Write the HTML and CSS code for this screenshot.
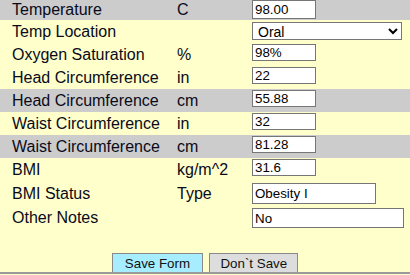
FILE: index.html
```html
<!DOCTYPE html>
<html lang="en">
<head>
    <meta charset="UTF-8">
    <title>Vitals</title>
    <link rel="stylesheet" href="styles.css">
</head>
<body>
<form class="vitals">
    <table class="grid">
        <colgroup>
            <col class="c-label">
            <col class="c-unit">
            <col class="c-field">
        </colgroup>
        <tr class="alt first">
            <td>Temperature</td>
            <td>C</td>
            <td><input class="num" type="text" value="98.00"></td>
        </tr>
        <tr>
            <td>Temp Location</td>
            <td></td>
            <td>
                <select class="pick">
                    <option>Oral</option>
                    <option>Axillary</option>
                    <option>Rectal</option>
                </select>
            </td>
        </tr>
        <tr>
            <td>Oxygen Saturation</td>
            <td>%</td>
            <td><input class="num" type="text" value="98%"></td>
        </tr>
        <tr>
            <td>Head Circumference</td>
            <td>in</td>
            <td><input class="num" type="text" value="22"></td>
        </tr>
        <tr class="alt">
            <td>Head Circumference</td>
            <td>cm</td>
            <td><input class="num" type="text" value="55.88"></td>
        </tr>
        <tr>
            <td>Waist Circumference</td>
            <td>in</td>
            <td><input class="num" type="text" value="32"></td>
        </tr>
        <tr class="alt">
            <td>Waist Circumference</td>
            <td>cm</td>
            <td><input class="num" type="text" value="81.28"></td>
        </tr>
        <tr>
            <td>BMI</td>
            <td>kg/m^2</td>
            <td><input class="num" type="text" value="31.6"></td>
        </tr>
        <tr class="tall">
            <td>BMI Status</td>
            <td>Type</td>
            <td><input class="mid" type="text" value="Obesity I"></td>
        </tr>
        <tr class="tall">
            <td>Other Notes</td>
            <td></td>
            <td><input class="wide" type="text" value="No"></td>
        </tr>
    </table>
    <div class="actions">
        <input class="btn save" type="button" value="Save Form">
        <input class="btn" type="button" value="Don`t Save">
    </div>
</form>
</body>
</html>
```

FILE: styles.css
```css
html,body{
    margin:0;
    padding:0;
}
body{
    background:#ffffcc;
    font-family:"Liberation Sans", Arial, sans-serif;
    color:#0a0a1a;
    height:275px;
    overflow:hidden;
}
.grid{
    width:100%;
    table-layout:fixed;
    border-collapse:collapse;
    font-size:16px;
}
.c-label{
    width:177px;
}
.c-unit{
    width:75px;
}
.grid td{
    padding:1px 0 1px 0;
    line-height:21px;
    vertical-align:top;
    white-space:nowrap;
}
.grid tr.alt{
    background:#cccccc;
}
.grid tr.first td{
    padding:0;
    line-height:20px;
}
.grid tr.tall td{
    padding-top:2px;
    line-height:21px;
}
.grid tr td:first-child{
    padding-left:12px;
}
.grid input,
.grid select{
    display:block;
    box-sizing:border-box;
    margin:0;
    font-family:"Liberation Sans", Arial, sans-serif;
    font-size:13.33px;
    color:#000;
    background:#fff;
    border:1px solid #767676;
    border-radius:0;
}
.grid input{
    padding:0 2px;
}
.grid .num{
    width:64px;
    height:17px;
}
.grid tr.first .num{
    height:19px;
}
.grid .pick{
    width:150px;
    height:18px;
    margin-top:1px;
    padding:0 0 0 1px;
    font-size:14px;
}
.grid .mid{
    width:124px;
    height:21px;
}
.grid .wide{
    width:152px;
    height:20px;
    margin-top:1px;
}
.actions{
    margin-top:24px;
    text-align:center;
    border-bottom:2px solid #9a9a9a;
    height:19px;
}
.btn{
    box-sizing:border-box;
    height:19px;
    margin:0 1px;
    padding:0 10px;
    font-family:"Liberation Sans", Arial, sans-serif;
    font-size:13.33px;
    color:#111;
    background:#dddddd;
    border:1px solid #8a8a8a;
    border-bottom:none;
    vertical-align:top;
}
.btn.save{
    background:#a6eeff;
    padding:0 12px;
}
```
